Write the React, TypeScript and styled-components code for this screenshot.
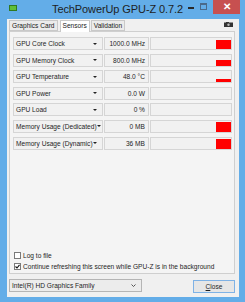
import React from "react";
import styled, { createGlobalStyle } from "styled-components";

const Global = createGlobalStyle`
  html, body { margin: 0; padding: 0; }
  body { background: #63ade8; font-family: "Liberation Sans", Arial, sans-serif; }
`;

const Window = styled.div`
  width: 245px;
  height: 302px;
  background: #63ade8;
  display: flex;
  flex-direction: column;
  overflow: hidden;
`;

const TitleBar = styled.div`
  height: 19px;
  display: grid;
  grid-template-columns: 1fr auto 1fr;
  align-items: start;
`;

const TitleLeft = styled.div`
  padding: 5px 0 0 9px;
`;

const AppIcon = styled.div`
  width: 6px;
  height: 4px;
  background: #5fbf3a;
  border: 1px solid #2f7a22;
`;

const TitleText = styled.div`
  font-size: 11px;
  line-height: 18px;
  color: #1e1e1e;
  letter-spacing: -0.1px;
`;

const Controls = styled.div`
  display: flex;
  justify-content: flex-end;
  align-items: flex-start;
  padding-right: 5px;
`;

const MinBtn = styled.div`
  width: 15px;
  height: 14px;
  display: flex;
  align-items: center;
  justify-content: center;
  &::after {
    content: "";
    width: 6px;
    height: 2px;
    background: #2a2a2a;
    margin-top: 1px;
  }
`;

const MaxBtn = styled.div`
  width: 11px;
  height: 14px;
  display: flex;
  justify-content: center;
  padding-top: 3px;
  box-sizing: border-box;
  &::after {
    content: "";
    width: 5px;
    height: 4px;
    border: 1px solid #4a6a8a;
    border-top-width: 2px;
  }
`;

const CloseBtn = styled.div`
  width: 27px;
  height: 14px;
  margin-left: 4px;
  background: #c75050;
  color: #fff;
  font-size: 10px;
  font-weight: bold;
  display: flex;
  align-items: center;
  justify-content: center;
  line-height: 1;
`;

const Client = styled.div`
  flex: 1;
  margin: 0 6px 5px 7px;
  background: #f0f0f0;
  display: flex;
  flex-direction: column;
  padding: 1px 4px 0 2px;
`;

const TabStrip = styled.div`
  height: 11px;
  display: flex;
  align-items: flex-end;
  position: relative;
`;

const Tab = styled.div<{ $active?: boolean }>`
  height: ${(p) => (p.$active ? 11 : 9)}px;
  padding: 0 2px;
  margin-right: ${(p) => (p.$active ? 1 : 2)}px;
  margin-bottom: ${(p) => (p.$active ? -1 : 0)}px;
  border: 1px solid #c9c9c9;
  border-bottom: ${(p) => (p.$active ? "none" : "1px solid #c9c9c9")};
  background: ${(p) => (p.$active ? "#ffffff" : "#ebebeb")};
  font-size: 6.6px;
  line-height: 9px;
  color: #1a1a1a;
  box-sizing: content-box;
  position: relative;
  z-index: 1;
`;

const CamIcon = styled.svg`
  position: absolute;
  right: 2px;
  top: 2px;
`;

const Panel = styled.div`
  height: 243px;
  box-sizing: border-box;
  border: 1px solid #cfcfcf;
  background: #f4f4f4;
  padding: 5px 2px 0 3px;
  display: flex;
  flex-direction: column;
`;

const Rows = styled.div`
  display: flex;
  flex-direction: column;
  gap: 3.6px;
`;

const Row = styled.div`
  display: flex;
  height: 13px;
  gap: 1px;
`;

const NameBox = styled.div`
  width: 90px;
  box-sizing: border-box;
  border: 1px solid #d5d5d5;
  background: #f1f1f1;
  display: flex;
  align-items: center;
  justify-content: space-between;
  padding: 0 5px 0 2px;
  font-size: 6.6px;
  color: #1e1e1e;
  white-space: nowrap;
  overflow: hidden;
`;

const Arrow = styled.span`
  width: 0;
  height: 0;
  border-left: 2px solid transparent;
  border-right: 2px solid transparent;
  border-top: 2.5px solid #222;
  flex-shrink: 0;
`;

const ValueBox = styled.div`
  width: 45px;
  box-sizing: border-box;
  border: 1px solid #d5d5d5;
  background: #f1f1f1;
  display: flex;
  align-items: center;
  justify-content: flex-end;
  padding-right: 3px;
  font-size: 6.6px;
  color: #1e1e1e;
  white-space: nowrap;
`;

const GraphBox = styled.div`
  flex: 1;
  box-sizing: border-box;
  border: 1px solid #d5d5d5;
  background: #f1f1f1;
  display: flex;
  align-items: flex-end;
  justify-content: flex-end;
  padding-right: 0;
`;

const Bar = styled.div`
  width: 15px;
  background: #ff0000;
`;

const Spacer = styled.div`
  flex: 1;
`;

const Checks = styled.div`
  display: flex;
  flex-direction: column;
  gap: 2px;
  padding: 0 0 2px 1px;
`;

const CheckRow = styled.label`
  display: flex;
  align-items: center;
  gap: 2px;
  height: 9px;
  font-size: 6.6px;
  color: #1e1e1e;
`;

const Box = styled.span<{ $checked?: boolean }>`
  width: 7px;
  height: 7px;
  box-sizing: border-box;
  border: 1px solid #7a7a7a;
  background: #fff;
  display: flex;
  align-items: center;
  justify-content: center;
  flex-shrink: 0;
`;

const Bottom = styled.div`
  display: flex;
  justify-content: space-between;
  align-items: flex-start;
  padding-top: 5px;
`;

const Combo = styled.div`
  width: 133px;
  height: 13px;
  box-sizing: border-box;
  border: 1px solid #b5b5b5;
  background: #ececec;
  display: flex;
  align-items: center;
  justify-content: space-between;
  padding: 0 5px 0 2px;
  font-size: 6.6px;
  color: #1e1e1e;
`;

const ComboArrow = styled.svg``;

const Button = styled.div`
  width: 42px;
  height: 13px;
  margin-top: 1px;
  box-sizing: border-box;
  border: 1px solid #7fb2e5;
  background: #e6e6e6;
  display: flex;
  align-items: center;
  justify-content: center;
  font-size: 6.6px;
  color: #1e1e1e;
  & u { text-decoration: underline; }
`;

const sensors = [
  { name: "GPU Core Clock", value: "1000.0 MHz", bar: 9 },
  { name: "GPU Memory Clock", value: "800.0 MHz", bar: 6 },
  { name: "GPU Temperature", value: "48.0 °C", bar: 3 },
  { name: "GPU Power", value: "0.0 W", bar: 0 },
  { name: "GPU Load", value: "0 %", bar: 0 },
  { name: "Memory Usage (Dedicated)", value: "0 MB", bar: 10 },
  { name: "Memory Usage (Dynamic)", value: "36 MB", bar: 10 },
];

export default function App() {
  return (
    <Window>
      <Global />
      <TitleBar>
        <TitleLeft>
          <AppIcon />
        </TitleLeft>
        <TitleText>TechPowerUp GPU-Z 0.7.2</TitleText>
        <Controls>
          <MinBtn />
          <MaxBtn />
          <CloseBtn>✕</CloseBtn>
        </Controls>
      </TitleBar>
      <Client>
        <TabStrip>
          <Tab>Graphics Card</Tab>
          <Tab $active>Sensors</Tab>
          <Tab>Validation</Tab>
          <CamIcon width="9" height="5" viewBox="0 0 9 5">
            <rect x="0" y="0.5" width="9" height="4.5" fill="#333" />
            <rect x="2" y="0" width="3" height="1" fill="#333" />
            <circle cx="4.5" cy="2.8" r="1.2" fill="#bbb" />
          </CamIcon>
        </TabStrip>
        <Panel>
          <Rows>
            {sensors.map((s) => (
              <Row key={s.name}>
                <NameBox>
                  <span>{s.name}</span>
                  <Arrow />
                </NameBox>
                <ValueBox>{s.value}</ValueBox>
                <GraphBox>
                  {s.bar > 0 && <Bar style={{ height: s.bar }} />}
                </GraphBox>
              </Row>
            ))}
          </Rows>
          <Spacer />
          <Checks>
            <CheckRow>
              <Box />
              Log to file
            </CheckRow>
            <CheckRow>
              <Box $checked>
                <svg width="5" height="5" viewBox="0 0 5 5">
                  <path d="M0.5 2.5 L2 4 L4.5 0.8" stroke="#111" strokeWidth="1.1" fill="none" />
                </svg>
              </Box>
              Continue refreshing this screen while GPU-Z is in the background
            </CheckRow>
          </Checks>
        </Panel>
        <Bottom>
          <Combo>
            <span>Intel(R) HD Graphics Family</span>
            <ComboArrow width="5" height="3" viewBox="0 0 5 3">
              <path d="M0.5 0.5 L2.5 2.5 L4.5 0.5" stroke="#444" strokeWidth="0.9" fill="none" />
            </ComboArrow>
          </Combo>
          <Button>
            <span><u>C</u>lose</span>
          </Button>
        </Bottom>
      </Client>
    </Window>
  );
}
